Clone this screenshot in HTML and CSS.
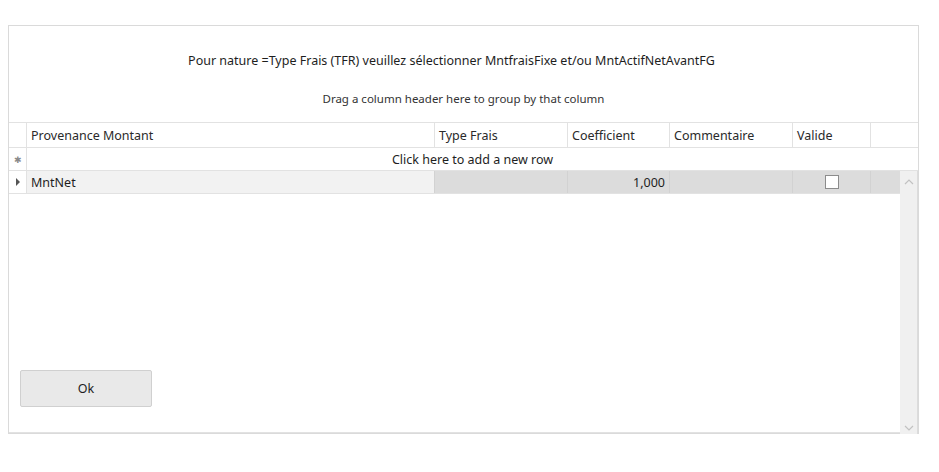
FILE: index.html
```html
<!DOCTYPE html>
<html lang="fr">
<head>
  <meta charset="UTF-8">
  <title>Provenance Montant</title>
  <link rel="stylesheet" href="styles.css">
</head>
<body>
  <div class="dialog">
    <!-- Title and group panel -->
    <div class="top-area">
      <p class="title">Pour nature =Type Frais (TFR) veuillez sélectionner MntfraisFixe et/ou MntActifNetAvantFG</p>
      <p class="group-hint">Drag a column header here to group by that column</p>
    </div>

    <!-- Grid -->
    <div class="grid">
      <div class="row header-row">
        <div class="cell row-head"></div>
        <div class="cell">Provenance Montant</div>
        <div class="cell">Type Frais</div>
        <div class="cell">Coefficient</div>
        <div class="cell">Commentaire</div>
        <div class="cell">Valide</div>
        <div class="cell filler"></div>
      </div>
      <div class="row new-row">
        <div class="cell row-head"><span class="star">&#x2731;</span></div>
        <div class="new-row-text">Click here to add a new row</div>
      </div>

      <div class="body">
        <div class="body-main">
          <div class="row data-row">
            <div class="cell row-head"><span class="arrow"></span></div>
            <div class="cell current">MntNet</div>
            <div class="cell"></div>
            <div class="cell num">1,000</div>
            <div class="cell"></div>
            <div class="cell center"><span class="checkbox"></span></div>
            <div class="cell filler"></div>
          </div>
          <div class="actions">
            <button class="ok-button">Ok</button>
          </div>
        </div>
        <div class="scrollbar">
          <svg width="10" height="6" viewBox="0 0 10 6"><path d="M1 5 L5 1 L9 5" fill="none" stroke="#c2c2c2" stroke-width="1.2"/></svg>
          <svg width="10" height="6" viewBox="0 0 10 6"><path d="M1 1 L5 5 L9 1" fill="none" stroke="#c2c2c2" stroke-width="1.2"/></svg>
        </div>
      </div>
    </div>
  </div>
</body>
</html>
```
FILE: styles.css
```css
/* General */
body {
  margin: 0;
  background-color: #fff;
  font-family: 'Noto Sans', 'Open Sans', sans-serif;
  color: #1e1e1e;
}

.dialog {
  margin: 25px 0 0 8px;
  width: 911px;
  height: 409px;
  border: 1px solid #dadada;
  box-sizing: border-box;
  display: flex;
  flex-direction: column;
}

/* Top area */
.top-area {
  height: 96px;
  display: flex;
  flex-direction: column;
  align-items: center;
}

.title {
  margin: 26px 24px 0 0;
  font-size: 12.5px;
  line-height: 18px;
}

.group-hint {
  margin: 21px 0 0;
  font-size: 11.5px;
  line-height: 16px;
  color: #333;
}

/* Grid */
.grid {
  flex: 1;
  display: flex;
  flex-direction: column;
  border-top: 1px solid #e2e2e2;
}

.row {
  display: grid;
  grid-template-columns: 18px 408px 133px 102px 123px 78px 1fr;
  border-bottom: 1px solid #e2e2e2;
}

.cell {
  border-right: 1px solid #e2e2e2;
  padding: 0 4px;
  font-size: 12.5px;
  white-space: nowrap;
  display: flex;
  align-items: center;
}

.cell.filler {
  border-right: none;
}

.row-head {
  padding: 0;
  justify-content: center;
}

.header-row {
  height: 24px;
}

.header-row .cell {
  color: #2a2a2a;
}

.new-row {
  height: 22px;
  grid-template-columns: 18px 1fr;
}

.new-row-text {
  font-size: 12.5px;
  display: flex;
  align-items: center;
  justify-content: center;
}

.star {
  font-size: 9px;
  color: #8a8a8a;
}

/* Body with scrollbar */
.body {
  flex: 1;
  display: flex;
}

.body-main {
  flex: 1;
  display: flex;
  flex-direction: column;
  border-bottom: 1px solid #e2e2e2;
}

.data-row {
  height: 22px;
}

.data-row .cell {
  background-color: #dcdcdc;
  border-right-color: #d2d2d2;
}

.data-row .cell.row-head {
  background-color: #fff;
  border-right-color: #e2e2e2;
}

.data-row .cell.current {
  background-color: #f2f2f2;
}

.data-row .num {
  justify-content: flex-end;
}

.data-row .center {
  justify-content: center;
}

.arrow {
  width: 0;
  height: 0;
  border-left: 4px solid #555;
  border-top: 4px solid transparent;
  border-bottom: 4px solid transparent;
}

.checkbox {
  width: 12px;
  height: 12px;
  border: 1px solid #8c8c8c;
  background-color: #fff;
}

.actions {
  margin-top: auto;
  padding: 0 0 25px 11px;
}

.ok-button {
  width: 132px;
  height: 37px;
  font-family: inherit;
  font-size: 12.5px;
  color: #1e1e1e;
  background-color: #e9e9e9;
  border: 1px solid #d0d0d0;
  border-radius: 2px;
}

.scrollbar {
  width: 18px;
  background-color: #f0f0f0;
  border-right: 1px solid #dcdcdc;
  display: flex;
  flex-direction: column;
  justify-content: space-between;
  align-items: center;
  padding: 8px 0 4px;
  box-sizing: border-box;
  margin-bottom: -2px;
}
```
